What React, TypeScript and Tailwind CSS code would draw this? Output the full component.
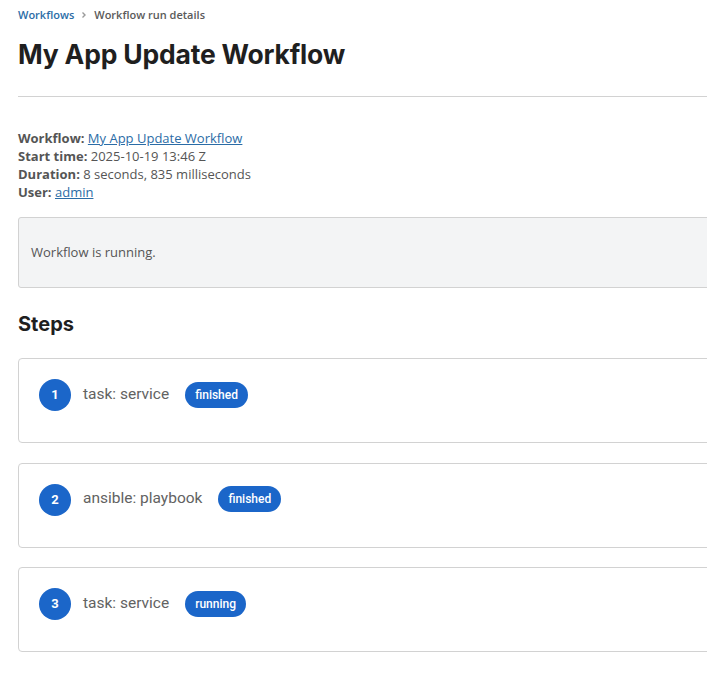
import React from "react"

interface Step {
  num: number
  name: string
  status: string
}

const steps: Step[] = [
  { num: 1, name: "task: service", status: "finished" },
  { num: 2, name: "ansible: playbook", status: "finished" },
  { num: 3, name: "task: service", status: "running" },
]

function StepCard({ step }: { step: Step }) {
  return (
    <div className="border border-[#d2d2d2] rounded-[4px] bg-white pl-5 pt-5 h-[85px]">
      <div className="flex items-center">
        <div className="w-8 h-8 rounded-full bg-[#1b66c9] text-white flex items-center justify-center text-[13px] font-bold font-['Roboto',sans-serif]">
          {step.num}
        </div>
        <span className="ml-[12px] text-[15.5px] text-[#626262] font-['Roboto',sans-serif] -mt-[1px]">{step.name}</span>
        <span className="ml-4 h-[26px] px-[10px] rounded-full bg-[#1b66c9] text-white text-[12px] font-medium font-['Roboto',sans-serif] flex items-center -mt-[1px]">
          {step.status}
        </span>
      </div>
    </div>
  )
}

export default function App() {
  return (
    <div className="w-full overflow-hidden bg-white min-h-screen">
      <div className="w-[760px] pl-[18px] pt-[7px] font-['Open_Sans',sans-serif]">
        <nav className="flex items-center text-[11px] h-4">
          <a className="text-[#2b6ca6] font-semibold">Workflows</a>
          <svg className="mx-[6px]" width="8" height="8" viewBox="0 0 8 8">
            <path d="M2.5 1.5 L5 4 L2.5 6.5" fill="none" stroke="#9a9a9a" strokeWidth="1.4" />
          </svg>
          <span className="text-[#5a5a5a] font-semibold">Workflow run details</span>
        </nav>

        <h1 className="mt-[11px] text-[26.5px] leading-[40px] font-bold text-[#1f1f1f] font-['Inter',sans-serif] tracking-[-0.2px]">
          My App Update Workflow
        </h1>

        <hr className="mt-[22px] border-t border-[#d2d2d2]" />

        <div className="mt-[32px] text-[13px] leading-[18px] text-[#555]">
          <div>
            <span className="font-bold">Workflow:</span>{" "}
            <a className="text-[#2b6ca6] underline">My App Update Workflow</a>
          </div>
          <div>
            <span className="font-bold">Start time:</span> 2025-10-19 13:46 Z
          </div>
          <div>
            <span className="font-bold">Duration:</span> 8 seconds, 835 milliseconds
          </div>
          <div>
            <span className="font-bold">User:</span>{" "}
            <a className="text-[#2b6ca6] underline">admin</a>
          </div>
        </div>

        <div className="mt-[16px] h-[71px] bg-[#f3f4f5] border border-[#d2d2d2] rounded-[3px] flex items-center pl-[12px] text-[13px] text-[#555]">
          Workflow is running.
        </div>

        <h2 className="mt-[23px] text-[20px] leading-[26px] font-bold text-[#1f1f1f] font-['Inter',sans-serif]">
          Steps
        </h2>

        <div className="mt-[21px] flex flex-col gap-[19.5px]">
          {steps.map(step => (
            <StepCard key={step.num} step={step} />
          ))}
        </div>
      </div>
    </div>
  )
}
